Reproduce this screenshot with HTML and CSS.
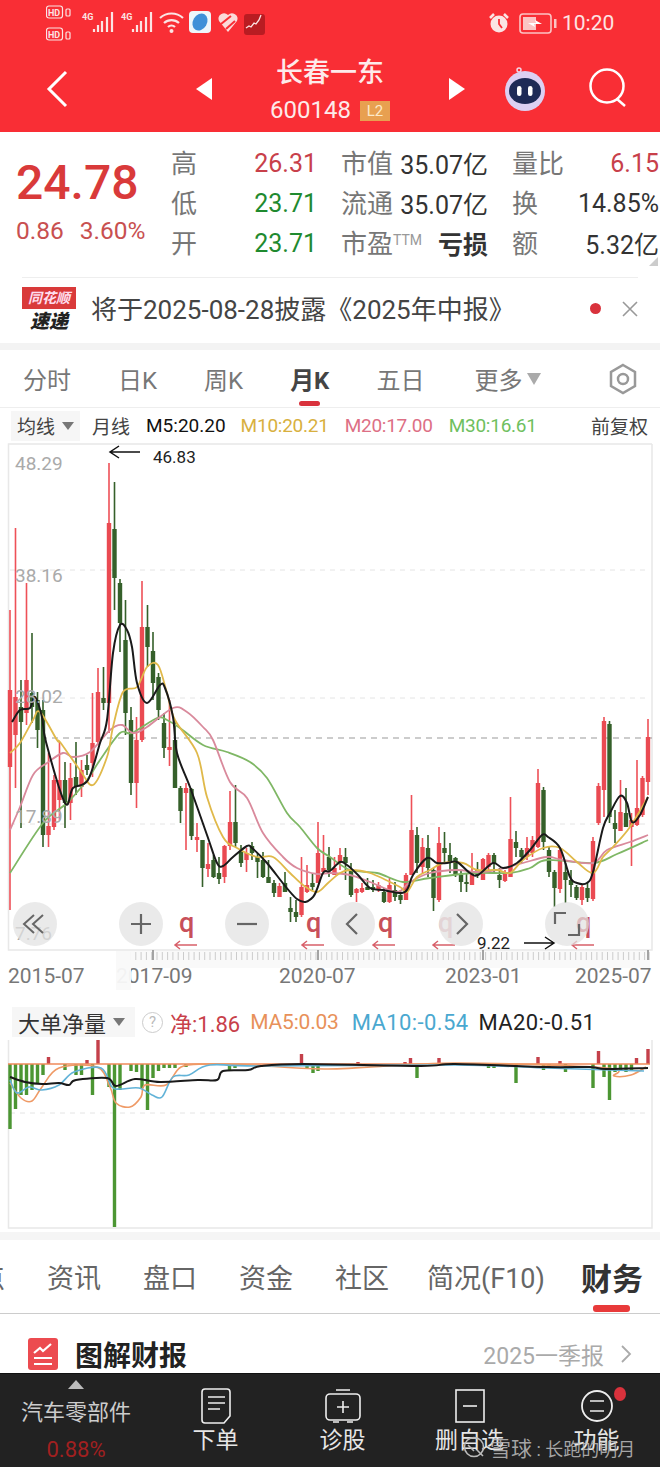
FILE: index.html
```html
<!DOCTYPE html>
<html lang="zh-CN">
  <head>
    <meta charset="UTF-8" />
    <title>长春一东 600148</title>
    <link rel="stylesheet" href="styles.css">
  </head>
  <body>
    <div class="app">
      <header class="top">
        <div class="status">
          <svg class="status-left" width="250" height="45" viewBox="46 0 250 45">
            <g fill="none" stroke="#fbe4e4" stroke-width="1.2">
              <rect x="46.5" y="6" width="16" height="12" rx="2.5" />
              <rect x="46.5" y="28" width="16" height="12" rx="2.5" />
              <rect x="66" y="9" width="4" height="7" rx="1" />
              <rect x="66" y="32" width="4" height="7" rx="1" />
            </g>
            <text class="tiny" x="48" y="15.5">HD</text>
            <text class="tiny" x="48" y="37.5">HD</text>
            <text class="tiny small" x="82" y="20">4G</text>
            <text class="tiny small" x="121" y="20">4G</text>
            <path d="M94 32v-3M98 32v-7M102 32v-11M107 32v-15M112 32v-20M133 32v-3M137 32v-7M141 32v-11M146 32v-15M151 32v-20" stroke="#fbe4e4" stroke-width="2.2" fill="none" />
            <g fill="none" stroke="#fbe4e4" stroke-width="2.2">
              <path d="M160 18a17 17 0 0 1 23 0M164 23a11 11 0 0 1 15 0M168 27a5 5 0 0 1 7 0" />
            </g>
            <circle cx="171.5" cy="31" r="2" fill="#fbe4e4" />
            <rect x="189" y="11" width="22" height="22" rx="4" fill="#eef6fb" />
            <ellipse cx="200" cy="22" rx="7" ry="9" fill="#3f8fd8" transform="rotate(30 200 22)" />
            <path d="M228 32l-9-11a5.5 5.5 0 0 1 9-6 5.5 5.5 0 0 1 9 6z" fill="#fbdada" />
            <path d="M221 24l10-8M226 29l9-8" stroke="#f92e35" stroke-width="2" />
            <rect x="244" y="14" width="21" height="21" rx="3" fill="#b91c22" />
            <path d="M246 28l3-2 2 1 3-4 2 1 3-4 2-5" fill="none" stroke="#fbe4e4" stroke-width="1.3" />
          </svg>
          <svg class="alarm" width="22" height="22" viewBox="0 0 22 22">
            <circle cx="11" cy="12" r="8.5" fill="#fbe4e4" />
            <path d="M11 7v5l3 4" stroke="#f92e35" stroke-width="1.8" fill="none" />
            <path d="M2 6l4-4M20 6l-4-4" stroke="#fbe4e4" stroke-width="2.5" />
          </svg>
          <svg class="battery" width="38" height="22" viewBox="0 0 38 22">
            <rect x="1" y="2" width="31" height="19" rx="3" fill="none" stroke="#fbc4c4" stroke-width="1.6" />
            <rect x="4" y="5" width="13" height="13" fill="#fbc4c4" />
            <path d="M9 11h8l-1-3 7 4h-8l1 3z" fill="#fff" />
            <rect x="35" y="7" width="2.5" height="9" fill="#fbc4c4" />
          </svg>
          <span class="clock">10:20</span>
        </div>
        <nav class="nav">
          <svg class="back" width="24" height="40" viewBox="0 0 24 40">
            <path d="M21 3L4 20l17 17" fill="none" stroke="#fff" stroke-width="3" />
          </svg>
          <span class="tri tri-left"></span>
          <div class="stock">
            <div class="stock-name">长春一东</div>
            <div class="stock-code">600148 <span class="l2">L2</span></div>
          </div>
          <span class="tri tri-right"></span>
          <svg class="robot" width="44" height="46" viewBox="0 0 44 46">
            <circle cx="16" cy="4" r="2" fill="none" stroke="#f4d4e4" stroke-width="1.5" />
            <circle cx="22" cy="25" r="20" fill="#dcd0f2" />
            <ellipse cx="22" cy="25" rx="16" ry="13" fill="#1e2a56" />
            <rect x="14" y="20" width="4.5" height="10" rx="2.2" fill="#fff" />
            <rect x="25" y="20" width="4.5" height="10" rx="2.2" fill="#fff" />
          </svg>
          <svg class="search" width="42" height="42" viewBox="0 0 42 42">
            <circle cx="19" cy="18" r="16.5" fill="none" stroke="#fff" stroke-width="2.5" />
            <path d="M29 31l8 7" stroke="#fff" stroke-width="2.5" />
          </svg>
        </nav>
      </header>

      <section class="quote">
        <div class="price">
          <div class="price-now">24.78</div>
          <div class="price-change"><span>0.86</span><span>3.60%</span></div>
        </div>
        <div class="quote-grid">
          <div class="cell"><span class="lbl">高</span><span class="val red">26.31</span></div>
          <div class="cell"><span class="lbl">市值</span><span class="val">35.07亿</span></div>
          <div class="cell"><span class="lbl">量比</span><span class="val red">6.15</span></div>
          <div class="cell"><span class="lbl">低</span><span class="val green">23.71</span></div>
          <div class="cell"><span class="lbl">流通</span><span class="val">35.07亿</span></div>
          <div class="cell"><span class="lbl">换</span><span class="val">14.85%</span></div>
          <div class="cell"><span class="lbl">开</span><span class="val green">23.71</span></div>
          <div class="cell"><span class="lbl">市盈<sup class="ttm">TTM</sup></span><span class="val strong">亏损</span></div>
          <div class="cell"><span class="lbl">额</span><span class="val">5.32亿</span></div>
        </div>
        <span class="corner"></span>
      </section>

      <section class="news">
        <div class="news-logo">
          <span class="logo-top">同花顺</span>
          <span class="logo-bottom">速递</span>
        </div>
        <span class="news-text">将于2025-08-28披露《2025年中报》</span>
        <span class="news-dot"></span>
        <svg class="news-close" width="16" height="16" viewBox="0 0 16 16">
          <path d="M1 1l14 14M15 1L1 15" stroke="#999" stroke-width="1.6" />
        </svg>
      </section>
      <div class="band"></div>

      <div class="period-tabs">
        <span>分时</span>
        <span>日K</span>
        <span>周K</span>
        <span class="active">月K</span>
        <span>五日</span>
        <span class="more">更多<i class="caret"></i></span>
        <svg class="hex" width="30" height="32" viewBox="0 0 30 32">
          <path d="M15 2l12 7v14l-12 7-12-7V9z" fill="none" stroke="#999" stroke-width="2.5" />
          <circle cx="15" cy="16" r="5" fill="none" stroke="#999" stroke-width="2.5" />
        </svg>
      </div>

      <div class="ma-row">
        <span class="chip">均线<i class="caret small"></i></span>
        <span class="ma-name">月线</span>
        <span class="m5">M5:20.20</span>
        <span class="m10">M10:20.21</span>
        <span class="m20">M20:17.00</span>
        <span class="m30">M30:16.61</span>
        <span class="adjust">前复权</span>
      </div>

      <div class="chart">
        <svg class="chart-svg" width="660" height="549" viewBox="0 441 660 549">
          <path class="frame" d="M652 444H8.5V950H652V444" />
          <path class="grid" d="M10 570H650M10 698H650M10 824H650" />
          <path class="last" d="M30 738H652" />
          <g id="candles"></g>
          <g id="lines"></g>
          <g class="y-labels">
            <text x="15" y="470">48.29</text>
            <text x="15" y="582">38.16</text>
            <text x="15" y="703">28.02</text>
            <text x="15" y="823">17.89</text>
            <text x="15" y="940">7.76</text>
          </g>
          <rect x="118" y="951" width="532" height="17" fill="#f9f9f9" />
          <path class="ticks" d="M130 956H650" />
          <path class="ticks-major" d="M153 950v10M318 950v10M483 950v10M648 950v10" />
          <g class="x-labels">
            <text x="8" y="983">2015-07</text>
            <text x="116" y="983">2017-09</text>
            <text x="279" y="983">2020-07</text>
            <text x="445" y="983">2023-01</text>
            <text x="575" y="983">2025-07</text>
          </g>
          <rect x="116" y="951" width="15" height="49" fill="#f9f9f9" fill-opacity="0.95" />
          <g class="marks">
            <text x="179" y="932">q</text>
            <text x="306" y="932">q</text>
            <text x="378" y="932">q</text>
            <text class="faded" x="438" y="932">q</text>
            <text x="576" y="932">q</text>
          </g>
          <path class="mark-arrows" d="M176 945h21M180 941l-5 4 5 4M303 945h21M307 941l-5 4 5 4M374 945h21M378 941l-5 4 5 4M434 945h21M438 941l-5 4 5 4M573 945h21M577 941l-5 4 5 4" />
          <path class="note-arrow" d="M140 452H110M119 446l-9 6 9 6M524 943H554M545 937l9 6-9 6" />
          <text class="note" x="153" y="463">46.83</text>
          <text class="note" x="477" y="949">9.22</text>
        </svg>
        <div class="fab fab-1">
          <svg width="28" height="28" viewBox="0 0 28 28"><path d="M13 5l-10 9 10 9M22 5l-10 9 10 9" fill="none" stroke="#666" stroke-width="2" /></svg>
        </div>
        <div class="fab fab-2">
          <svg width="24" height="24" viewBox="0 0 24 24"><path d="M12 2v20M2 12h20" stroke="#666" stroke-width="2.2" /></svg>
        </div>
        <div class="fab fab-3">
          <svg width="24" height="24" viewBox="0 0 24 24"><path d="M2 12h20" stroke="#666" stroke-width="2.2" /></svg>
        </div>
        <div class="fab fab-4">
          <svg width="24" height="24" viewBox="0 0 24 24"><path d="M16 2L6 12l10 10" fill="none" stroke="#666" stroke-width="2.2" /></svg>
        </div>
        <div class="fab fab-5">
          <svg width="24" height="24" viewBox="0 0 24 24"><path d="M8 2l10 10L8 22" fill="none" stroke="#666" stroke-width="2.2" /></svg>
        </div>
        <div class="fab fab-6">
          <svg width="28" height="28" viewBox="0 0 28 28"><path d="M2 14V3h11M26 14v11H15" fill="none" stroke="#666" stroke-width="2.2" /></svg>
        </div>
      </div>

      <section class="flow">
        <div class="flow-head">
          <span class="chip chip-flow">大单净量<i class="caret small"></i></span>
          <span class="help">?</span>
          <span class="net">净:1.86</span>
          <span class="ma5">MA5:0.03</span>
          <span class="ma10">MA10:-0.54</span>
          <span class="ma20">MA20:-0.51</span>
        </div>
        <svg class="flow-svg" width="660" height="192" viewBox="0 1040 660 192">
          <path class="frame" d="M8.5 1040V1228H652V1040" />
          <path class="grid" d="M10 1113H650" />
          <g id="flowBars"></g>
          <path d="M8 1064H650" stroke="#ef8a5a" stroke-width="1.5" />
          <g id="flowLines"></g>
        </svg>
      </section>
      <div class="band band-low"></div>

      <div class="info-tabs">
        <span>点</span>
        <span>资讯</span>
        <span>盘口</span>
        <span>资金</span>
        <span>社区</span>
        <span class="f10">简况(F10)</span>
        <span class="active">财务</span>
      </div>

      <section class="report">
        <svg class="report-icon" width="30" height="32" viewBox="0 0 30 32">
          <rect width="30" height="32" rx="3" fill="#ec4b50" />
          <path d="M6 15l6-5 3 3 8-7M6 20h18M6 26h18" fill="none" stroke="#fff" stroke-width="2.2" />
        </svg>
        <span class="report-title">图解财报</span>
        <span class="report-date">2025一季报</span>
        <svg class="report-more" width="12" height="20" viewBox="0 0 12 20">
          <path d="M2 2l8 8-8 8" fill="none" stroke="#aaa" stroke-width="1.8" />
        </svg>
      </section>

      <footer class="bottom">
        <div class="sector">
          <span class="sector-up"></span>
          <span class="sector-name">汽车零部件</span>
          <span class="sector-pct">0.88%</span>
        </div>
        <div class="action">
          <svg width="32" height="36" viewBox="0 0 32 36">
            <path d="M5 1h22a3 3 0 0 1 3 3v24l-6 7H5a3 3 0 0 1-3-3V4a3 3 0 0 1 3-3z" fill="none" stroke="#eee" stroke-width="1.6" />
            <path d="M8 9h17M8 15h17M8 21h12" stroke="#eee" stroke-width="1.6" />
          </svg>
          <span>下单</span>
        </div>
        <div class="action">
          <svg width="36" height="36" viewBox="0 0 36 36">
            <rect x="1" y="6" width="34" height="26" rx="4" fill="none" stroke="#eee" stroke-width="1.6" />
            <path d="M11 2h14M18 13v12M12 19h12M8 34h6M22 34h6" stroke="#eee" stroke-width="1.6" />
          </svg>
          <span>诊股</span>
        </div>
        <div class="action">
          <svg width="32" height="36" viewBox="0 0 32 36">
            <rect x="2" y="2" width="28" height="32" fill="none" stroke="#eee" stroke-width="1.6" />
            <path d="M9 18h14" stroke="#eee" stroke-width="1.6" />
          </svg>
          <span>删自选</span>
        </div>
        <div class="action action-last">
          <svg width="36" height="36" viewBox="0 0 36 36">
            <circle cx="18" cy="18" r="15" fill="none" stroke="#eee" stroke-width="1.8" />
            <path d="M11 13h14M11 23h14" stroke="#eee" stroke-width="1.6" />
          </svg>
          <span>功能</span>
          <i class="badge-dot"></i>
        </div>
        <div class="watermark">
          <svg width="24" height="24" viewBox="0 0 24 24">
            <circle cx="12" cy="12" r="9.5" fill="none" stroke="#bbb" stroke-width="1.6" />
            <path d="M15 15l6 6M6 10l6 6" stroke="#bbb" stroke-width="1.6" />
          </svg>
          <span><b class="wm-brand">雪球</b> : 长跑的明月</span>
        </div>
      </footer>
    </div>
    <script src="chart.js"></script>
  </body>
</html>
```

FILE: styles.css
```css
* {
  box-sizing: border-box;
}
body {
  margin: 0;
  background: #fff;
  font-family: Roboto, "Noto Sans CJK SC", sans-serif;
}
.app {
  width: 660px;
  height: 1467px;
  overflow: hidden;
}

/* red header */
.top {
  height: 132px;
  background: #f92e35;
  color: #fff;
}
.status {
  height: 45px;
  display: flex;
  align-items: center;
  padding-left: 46px;
}
.status-left {
  flex: none;
}
.tiny {
  font-size: 9px;
  font-weight: 700;
  fill: #fbe4e4;
}
.alarm {
  margin-left: 192px;
}
.battery {
  margin-left: 9px;
}
.clock {
  margin-left: 5px;
  font-size: 21px;
  color: #fde4e4;
}
.nav {
  height: 87px;
  display: flex;
  align-items: center;
}
.back {
  margin-left: 45px;
}
.tri {
  width: 0;
  height: 0;
  border-top: 11px solid transparent;
  border-bottom: 11px solid transparent;
}
.tri-left {
  margin-left: 127px;
  border-right: 16px solid #fff;
}
.tri-right {
  margin-left: 1px;
  border-left: 16px solid #fff;
}
.stock {
  width: 236px;
  padding-top: 7px;
  text-align: center;
}
.stock-name {
  font-size: 27px;
  line-height: 36px;
  font-weight: 500;
  color: #fdeaea;
}
.stock-code {
  font-size: 24px;
  line-height: 38px;
  color: #fdeaea;
}
.l2 {
  display: inline-block;
  width: 30px;
  height: 20px;
  margin-left: 3px;
  background: #e8a050;
  color: #fde9c8;
  font-size: 15px;
  line-height: 20px;
  vertical-align: 2px;
}
.robot {
  margin-left: 38px;
}
.search {
  margin-left: 41px;
}

/* quote */
.quote {
  position: relative;
  height: 145px;
  display: flex;
  padding-top: 11px;
}
.price {
  width: 171px;
  flex: none;
  padding-left: 16px;
}
.price-now {
  margin-top: 10px;
  font-size: 48px;
  line-height: 60px;
  font-weight: 500;
  color: #d93a3a;
}
.price-change {
  display: flex;
  gap: 16px;
  font-size: 24.5px;
  line-height: 36px;
  color: #c85050;
}
.quote-grid {
  display: grid;
  grid-template-columns: 146px 147px 147px;
  grid-auto-rows: 40px;
  column-gap: 24px;
  white-space: nowrap;
}
.cell {
  display: flex;
  align-items: center;
  justify-content: space-between;
}
.lbl {
  margin-bottom: 4px;
  font-size: 26px;
  color: #777;
}
.val {
  font-size: 25px;
  color: #333;
}
.val.red {
  color: #c8404a;
}
.val.green {
  color: #1f8a2f;
}
.val.strong {
  font-weight: 700;
}
.ttm {
  font-size: 14px;
  vertical-align: 8px;
  line-height: 0;
  color: #999;
}
.corner {
  position: absolute;
  right: 2px;
  bottom: 11px;
  border-left: 9px solid transparent;
  border-bottom: 9px solid #ccc;
}

/* news strip */
.news {
  height: 66px;
  margin: 0 22px;
  border-top: 1px solid #eee;
  display: flex;
  align-items: center;
}
.news-logo {
  width: 54px;
  flex: none;
  display: flex;
  flex-direction: column;
  align-items: center;
}
.logo-top {
  width: 54px;
  height: 22px;
  background: #d93a3a;
  color: #fde;
  font-size: 14px;
  font-weight: 700;
  font-style: italic;
  line-height: 22px;
  text-align: center;
}
.logo-bottom {
  font-size: 19px;
  line-height: 25px;
  font-weight: 900;
  font-style: italic;
  color: #222;
}
.news-text {
  margin-left: 15px;
  margin-bottom: 6px;
  font-size: 26px;
  color: #444;
  white-space: nowrap;
}
.news-dot {
  width: 11px;
  height: 11px;
  margin-left: auto;
  margin-bottom: 4px;
  border-radius: 50%;
  background: #d9323c;
}
.news-close {
  margin-left: 21px;
  margin-bottom: 4px;
}
.band {
  height: 7px;
  background: #f3f3f3;
}
.band-low {
  height: 8px;
  background: #f5f5f5;
}

/* period tabs */
.period-tabs {
  height: 58px;
  padding-left: 23px;
  display: flex;
  align-items: center;
  gap: 47px;
  font-size: 24px;
  color: #777;
  border-bottom: 1px solid #eee;
}
.period-tabs .active {
  position: relative;
  font-weight: 700;
  color: #444;
}
.period-tabs .active::after {
  content: "";
  position: absolute;
  left: 9px;
  right: 9px;
  bottom: -10px;
  height: 5px;
  border-radius: 3px;
  background: #d9323c;
}
.more {
  margin-left: 3px;
  display: flex;
  align-items: center;
  gap: 5px;
}
.caret {
  width: 0;
  height: 0;
  display: inline-block;
  border-left: 7px solid transparent;
  border-right: 7px solid transparent;
  border-top: 12px solid #aaa;
}
.caret.small {
  border-left-width: 6px;
  border-right-width: 6px;
  border-top: 8px solid #777;
}
.hex {
  margin-left: 20px;
}

/* moving average legend */
.ma-row {
  height: 33px;
  padding: 2px 0 0 11px;
  display: flex;
  align-items: center;
  font-size: 19px;
  color: #444;
  white-space: nowrap;
}
.chip {
  display: flex;
  align-items: center;
  gap: 7px;
  height: 30px;
  width: 69px;
  padding-left: 6px;
  background: #f6f6f6;
}
.ma-name {
  margin-left: 12px;
}
.m5 {
  margin-left: 16px;
  color: #111;
}
.m10,
.m20,
.m30 {
  letter-spacing: -0.25px;
}
.m10 {
  margin-left: 15px;
  color: #d8b040;
}
.m20 {
  margin-left: 16px;
  color: #dd6f85;
}
.m30 {
  margin-left: 16px;
  color: #6fbf60;
}
.adjust {
  margin-left: auto;
  margin-right: 12px;
}

/* price chart */
.chart {
  position: relative;
  height: 549px;
  margin-bottom: 10px;
}
.chart-svg,
.flow-svg {
  display: block;
}
.frame {
  fill: none;
  stroke: #e8e8e8;
  stroke-width: 1.5;
}
.grid {
  fill: none;
  stroke: #e4e4e4;
  stroke-width: 1;
  stroke-dasharray: 5 5;
}
.last {
  fill: none;
  stroke: #999;
  stroke-width: 1;
  stroke-dasharray: 6 5;
}
.y-labels text {
  font-size: 19px;
  fill: #aaa;
}
.ticks {
  fill: none;
  stroke: #ccc;
  stroke-width: 8;
  stroke-dasharray: 1 4.3;
}
.ticks-major {
  fill: none;
  stroke: #888;
  stroke-width: 1.5;
}
.x-labels text {
  font-size: 21px;
  fill: #777;
}
.marks text {
  font-size: 27px;
  font-weight: 500;
  fill: #c8505a;
}
.marks .faded {
  fill: #e4b0b6;
}
.mark-arrows {
  fill: none;
  stroke: #d8606a;
  stroke-width: 1.5;
}
.note-arrow {
  fill: none;
  stroke: #111;
  stroke-width: 1.5;
}
.note {
  font-size: 17px;
  fill: #222;
}
.fab {
  position: absolute;
  top: 461px;
  width: 44px;
  height: 44px;
  border-radius: 50%;
  background: rgba(226, 226, 226, 0.72);
  display: flex;
  align-items: center;
  justify-content: center;
}
.fab-1 {
  left: 13px;
}
.fab-2 {
  left: 119px;
}
.fab-3 {
  left: 225px;
}
.fab-4 {
  left: 331px;
}
.fab-5 {
  left: 439px;
}
.fab-6 {
  left: 545px;
}

/* money flow panel */
.flow {
  height: 232px;
}
.flow-head {
  height: 40px;
  padding: 7px 0 3px 12px;
  display: flex;
  align-items: center;
  font-size: 22px;
  white-space: nowrap;
}
.chip-flow {
  width: 123px;
  color: #333;
}
.help {
  width: 21px;
  height: 21px;
  margin-left: 7px;
  border: 1.5px solid #ccc;
  border-radius: 50%;
  color: #bbb;
  font-size: 15px;
  line-height: 18px;
  text-align: center;
}
.net {
  margin-left: 7px;
  color: #c8404a;
}
.ma5 {
  margin-left: 10px;
  font-size: 21px;
  letter-spacing: -0.2px;
  color: #e8915a;
}
.ma10 {
  margin-left: 13px;
  letter-spacing: 0.4px;
  color: #4aa8d0;
}
.ma20 {
  margin-left: 10px;
  letter-spacing: 0.4px;
  color: #222;
}

/* bottom tabs */
.info-tabs {
  width: 682px;
  height: 74px;
  margin-left: -22px;
  display: flex;
  align-items: center;
  gap: 42px;
  font-size: 27px;
  color: #666;
  white-space: nowrap;
  border-bottom: 1px solid #ccc;
}
.info-tabs .f10 {
  margin-left: -4px;
}
.info-tabs .active {
  position: relative;
  margin-left: -6px;
  font-size: 31px;
  font-weight: 700;
  color: #333;
}
.info-tabs .active::after {
  content: "";
  position: absolute;
  left: 12px;
  right: 13px;
  bottom: -13px;
  height: 7px;
  border-radius: 3px;
  background: #e83a3a;
}
.report {
  height: 59px;
  padding: 20px 28px 0;
  display: flex;
  align-items: center;
}
.report-title {
  margin-left: 17px;
  font-size: 28px;
  font-weight: 700;
  color: #222;
}
.report-date {
  margin-left: auto;
  font-size: 23px;
  color: #aaa;
}
.report-more {
  margin-left: 16px;
}

/* dark bar */
.bottom {
  position: relative;
  height: 94px;
  background: #222;
  color: #e6e6e6;
  display: flex;
  border-top: 1px solid #111;
}
.sector {
  width: 152px;
  display: flex;
  flex-direction: column;
  align-items: center;
}
.sector-up {
  margin-top: 6px;
  border-left: 8px solid transparent;
  border-right: 8px solid transparent;
  border-bottom: 9px solid #bbb;
}
.sector-name {
  margin-top: 7px;
  font-size: 22px;
  line-height: 34px;
  color: #ccc;
}
.sector-pct {
  margin-top: 7px;
  font-size: 22px;
  color: #a02020;
}
.action {
  position: relative;
  width: 127px;
  display: flex;
  flex-direction: column;
  align-items: center;
  padding-top: 14px;
  font-size: 23px;
}
.action span {
  line-height: 38px;
  margin-top: -2px;
}
.badge-dot {
  position: absolute;
  left: 81px;
  top: 13px;
  width: 12px;
  height: 14px;
  border-radius: 50%;
  background: #d9323c;
}
.watermark {
  position: absolute;
  left: 462px;
  top: 58px;
  display: flex;
  align-items: center;
  gap: 4px;
  font-size: 18px;
  color: rgba(190, 190, 190, 0.85);
  white-space: nowrap;
}
.wm-brand {
  font-size: 21px;
  font-weight: 400;
}
```

FILE: chart.js
```js
// candle data read off the month bars: colour, high, body top, body bottom, low (page y)
var RED = "r";
var GREEN = "g";
var bars = [
  [RED, 610, 690, 767, 910], [RED, 528, 697, 735, 788], [GREEN, 680, 707, 722, 828], [RED, 583, 680, 713, 725],
  [GREEN, 633, 693, 707, 723], [GREEN, 692, 700, 730, 748], [GREEN, 700, 710, 835, 847], [RED, 753, 826, 835, 847],
  [RED, 775, 780, 827, 830], [RED, 742, 780, 800, 820], [GREEN, 762, 780, 803, 828], [RED, 763, 778, 803, 820],
  [GREEN, 742, 777, 787, 795], [RED, 760, 770, 787, 797], [GREEN, 755, 765, 770, 775], [RED, 693, 743, 763, 777],
  [RED, 668, 692, 742, 745], [GREEN, 667, 698, 703, 710], [RED, 463, 523, 703, 733], [GREEN, 482, 529, 578, 610],
  [GREEN, 579, 583, 623, 652], [GREEN, 600, 640, 713, 735], [GREEN, 707, 720, 783, 795], [RED, 717, 740, 783, 808],
  [RED, 581, 627, 740, 742], [GREEN, 605, 627, 647, 667], [GREEN, 632, 651, 683, 700], [GREEN, 673, 677, 710, 720],
  [GREEN, 713, 723, 748, 758], [RED, 700, 747, 750, 766], [GREEN, 720, 740, 788, 788], [GREEN, 786, 788, 811, 823],
  [RED, 783, 788, 793, 850], [GREEN, 788, 789, 836, 840], [RED, 823, 837, 840, 852], [GREEN, 840, 840, 868, 887],
  [RED, 843, 864, 869, 877], [GREEN, 855, 860, 877, 878], [GREEN, 857, 873, 879, 884], [RED, 845, 846, 877, 883],
  [RED, 791, 822, 846, 850], [GREEN, 785, 822, 843, 847], [GREEN, 845, 852, 863, 867], [RED, 848, 853, 860, 872],
  [GREEN, 842, 846, 853, 860], [GREEN, 853, 857, 862, 878], [GREEN, 852, 860, 877, 878], [GREEN, 860, 877, 883, 883],
  [GREEN, 880, 883, 893, 897], [RED, 883, 886, 897, 897], [GREEN, 872, 883, 892, 892], [GREEN, 897, 908, 912, 922],
  [GREEN, 900, 912, 917, 922], [RED, 857, 887, 915, 917], [RED, 865, 885, 892, 893], [GREEN, 873, 883, 887, 890],
  [RED, 822, 853, 883, 883], [RED, 835, 868, 872, 872], [GREEN, 847, 857, 870, 877], [RED, 857, 868, 875, 875],
  [RED, 848, 855, 863, 870], [GREEN, 848, 857, 863, 880], [GREEN, 863, 870, 895, 897], [RED, 888, 889, 893, 902],
  [RED, 883, 888, 892, 893], [GREEN, 878, 887, 890, 890], [GREEN, 880, 887, 890, 892], [RED, 882, 885, 890, 892],
  [GREEN, 888, 892, 902, 903], [RED, 878, 885, 902, 903], [GREEN, 882, 890, 897, 901], [GREEN, 890, 895, 900, 904],
  [RED, 873, 875, 900, 900], [RED, 795, 830, 875, 875], [GREEN, 827, 835, 863, 873], [RED, 838, 847, 867, 873],
  [GREEN, 835, 848, 868, 877], [GREEN, 868, 870, 898, 911], [RED, 827, 843, 900, 902], [GREEN, 832, 848, 853, 863],
  [GREEN, 843, 855, 862, 873], [GREEN, 857, 858, 875, 877], [GREEN, 870, 875, 882, 892], [GREEN, 873, 882, 884, 892],
  [RED, 853, 873, 885, 885], [GREEN, 862, 870, 875, 878], [RED, 858, 859, 880, 880], [RED, 853, 855, 867, 873],
  [GREEN, 853, 855, 863, 873], [GREEN, 868, 875, 880, 888], [RED, 870, 873, 881, 882], [RED, 797, 839, 877, 877],
  [GREEN, 831, 842, 848, 857], [GREEN, 848, 850, 857, 863], [RED, 837, 848, 857, 860], [RED, 836, 840, 853, 857],
  [RED, 769, 783, 847, 848], [GREEN, 787, 790, 842, 850], [GREEN, 847, 850, 872, 877], [GREEN, 870, 872, 888, 907],
  [RED, 847, 850, 889, 893], [GREEN, 863, 872, 880, 903], [GREEN, 870, 880, 885, 897], [GREEN, 885, 887, 898, 900],
  [RED, 885, 887, 900, 905], [GREEN, 882, 888, 898, 902], [RED, 837, 841, 899, 901], [RED, 783, 786, 823, 825],
  [RED, 717, 721, 790, 817], [GREEN, 721, 724, 817, 823], [GREEN, 810, 823, 829, 843], [RED, 780, 812, 831, 830],
  [GREEN, 788, 813, 827, 827], [RED, 813, 820, 827, 866], [RED, 760, 808, 825, 826], [RED, 776, 778, 815, 817],
  [RED, 719, 737, 782, 795]
];

var maLines = [
  { color: "#7fb765", width: 1.8, pts: "10,873 43,823 67,803 87,780 100,760 120,733 132,733 157,718 167,720 180,728 203,745 227,752 250,762 267,778 287,813 300,827 317,848 330,857 350,870 377,873 403,882 430,878 473,873 510,873 530,868 547,860 593,863 617,854 648,840" },
  { color: "#d98a9c", width: 1.8, pts: "10,830 20,807 33,775 47,763 63,753 73,757 90,752 110,730 122,725 133,733 147,727 173,708 187,712 203,727 213,740 230,782 247,798 263,833 283,857 297,868 317,874 330,873 350,875 370,882 397,892 410,882 430,873 457,870 477,872 497,870 523,863 547,857 563,860 593,863 607,850 630,842 648,835" },
  { color: "#e0b94a", width: 1.8, pts: "10,753 20,743 33,720 40,712 57,740 60,742 80,770 93,785 107,757 113,727 123,692 137,687 147,667 158,665 167,693 175,720 197,753 207,797 223,837 237,848 257,857 273,857 290,873 303,885 317,892 328,883 340,873 350,870 370,873 400,887 407,892 417,877 430,870 443,863 463,863 477,870 497,870 510,873 523,860 543,848 560,848 577,862 593,873 603,857 613,847 630,827 648,797" },
  { color: "#1a1a1a", width: 2, pts: "12,722 20,710 30,708 35,697 42,717 46,742 65,803 73,788 88,780 100,743 107,720 113,653 120,625 127,630 132,647 137,683 147,703 160,685 165,688 173,717 177,753 190,787 207,835 217,863 223,866 233,857 247,846 252,848 267,863 297,899 313,897 323,873 330,871 340,862 347,865 358,875 370,888 383,890 402,893 408,888 413,875 427,858 437,863 447,863 457,862 470,873 478,875 493,863 503,868 517,863 530,850 542,835 548,837 560,848 570,877 577,883 587,883 593,872 603,828 610,813 620,796 627,803 632,822 640,815 648,797" }
];

var flowBars = [
  [10, 1129], [15.5, 1109], [21, 1095], [26.5, 1095], [32, 1090], [37.5, 1083], [43, 1075], [48.5, 1057],
  [65, 1070], [76, 1075], [81.5, 1075], [87, 1060], [92.5, 1095], [98, 1040], [109, 1087], [114.5, 1227],
  [120, 1090], [131, 1071], [136.5, 1072], [142, 1088], [147.5, 1110], [153, 1078], [158.5, 1071],
  [164, 1068], [169.5, 1068], [175, 1068], [186, 1067], [229.5, 1071], [235, 1068], [301.5, 1054],
  [307, 1068], [313, 1073], [318, 1071], [358, 1062], [405, 1062], [410.5, 1058], [417, 1078], [439, 1058],
  [488.5, 1068], [494, 1068], [516, 1083], [538, 1057], [543.5, 1070], [549, 1068], [560, 1061], [565.5, 1072],
  [593, 1088], [598.5, 1051], [604, 1077], [609.5, 1100], [615, 1072], [620.5, 1070], [626, 1072], [631.5, 1070],
  [636.5, 1058], [648, 1049]
];

var flowLines = [
  { color: "#ef9a66", width: 1.6, pts: "10,1083 21,1098 32,1101 42,1087 59,1068 97,1067 110,1087 116,1103 130,1107 141,1097 145,1085 166,1085 181,1067 206,1064 252,1065 328,1069 455,1063 606,1068 614,1076 631,1075 646,1067" },
  { color: "#62b3d8", width: 1.6, pts: "10,1080 17,1093 29,1087 42,1090 59,1085 74,1072 101,1068 112,1087 120,1089 139,1088 152,1095 162,1097 173,1077 189,1075 210,1065 261,1066 455,1065 547,1068 610,1070 644,1071" },
  { color: "#1a1a1a", width: 2, pts: "10,1077 25,1082 42,1084 59,1083 69,1085 76,1080 107,1078 116,1086 135,1079 160,1082 198,1080 217,1080 223,1071 248,1070 261,1066 303,1064 421,1066 455,1064 547,1067 589,1067 606,1069 648,1068" }
];

var NS = "http://www.w3.org/2000/svg";

function addPath(parent, d, color, width) {
  var path = document.createElementNS(NS, "path");
  path.setAttribute("d", d);
  path.setAttribute("stroke", color);
  path.setAttribute("stroke-width", width);
  path.setAttribute("fill", "none");
  path.setAttribute("stroke-linejoin", "round");
  parent.appendChild(path);
}

function drawCandles() {
  var group = document.getElementById("candles");
  var wicks = { r: "", g: "" };
  var bodies = { r: "", g: "" };
  bars.forEach(function (bar, i) {
    var x = 10 + 5.5 * i;
    wicks[bar[0]] += "M" + x + " " + bar[1] + "V" + bar[4];
    bodies[bar[0]] += "M" + x + " " + bar[2] + "V" + Math.max(bar[3], bar[2] + 2);
  });
  addPath(group, wicks.r, "#ee5058", 1.6);
  addPath(group, wicks.g, "#35602a", 1.6);
  addPath(group, bodies.r, "#ea4a52", 4.4);
  addPath(group, bodies.g, "#35602a", 4.4);
}

// catmull-rom through the points so the averages read as curves
function smooth(pts) {
  var p = pts.split(" ").map(function (s) {
    return s.split(",").map(Number);
  });
  var d = "M" + p[0][0] + " " + p[0][1];
  for (var i = 0; i < p.length - 1; i++) {
    var a = p[Math.max(i - 1, 0)];
    var b = p[i];
    var c = p[i + 1];
    var e = p[Math.min(i + 2, p.length - 1)];
    d += "C" + (b[0] + (c[0] - a[0]) / 6) + " " + (b[1] + (c[1] - a[1]) / 6) + " " +
      (c[0] - (e[0] - b[0]) / 6) + " " + (c[1] - (e[1] - b[1]) / 6) + " " + c[0] + " " + c[1];
  }
  return d;
}

function drawLines(id, list) {
  var group = document.getElementById(id);
  list.forEach(function (line) {
    addPath(group, smooth(line.pts), line.color, line.width);
  });
}

function drawFlowBars() {
  var group = document.getElementById("flowBars");
  var red = "";
  var green = "";
  flowBars.forEach(function (bar) {
    if (bar[1] < 1064) {
      red += "M" + bar[0] + " 1064V" + bar[1];
    } else {
      green += "M" + bar[0] + " 1064V" + bar[1];
    }
  });
  addPath(group, red, "#c4404a", 3.4);
  addPath(group, green, "#4c9633", 3.4);
}

drawCandles();
drawLines("lines", maLines);
drawFlowBars();
drawLines("flowLines", flowLines);
```
